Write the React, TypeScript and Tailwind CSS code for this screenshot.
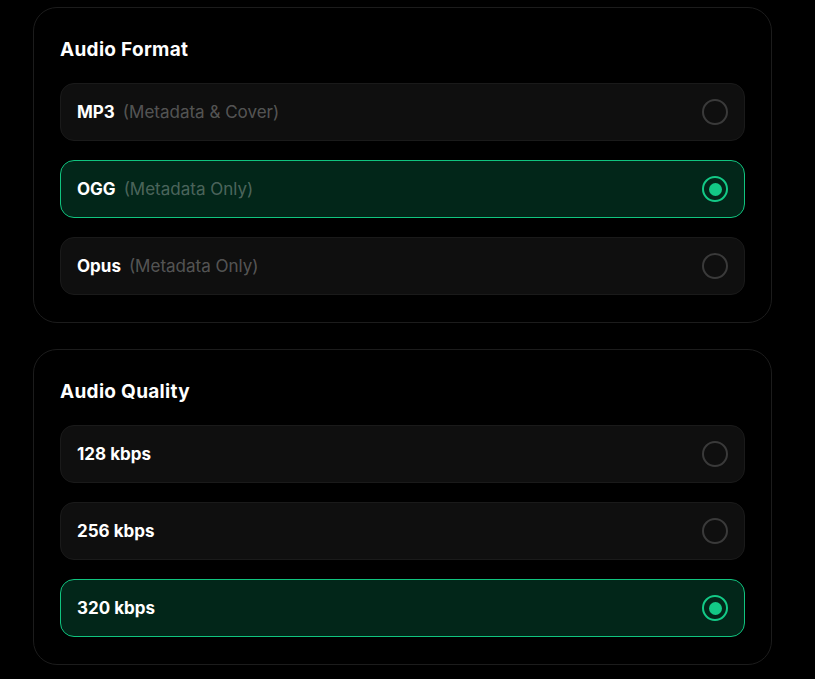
import React, { useState } from 'react';

type Opt = { id: string; label: string; note?: string };

const formats: Opt[] = [
  { id: 'mp3', label: 'MP3', note: '(Metadata & Cover)' },
  { id: 'ogg', label: 'OGG', note: '(Metadata Only)' },
  { id: 'opus', label: 'Opus', note: '(Metadata Only)' },
];

const qualities: Opt[] = [
  { id: '128', label: '128 kbps' },
  { id: '256', label: '256 kbps' },
  { id: '320', label: '320 kbps' },
];

const OptionGroup: React.FC<{ title: string; options: Opt[]; value: string; onChange: (v: string) => void }> = ({ title, options, value, onChange }) => {
  return (
    <div className="rounded-[24px] border border-[#1c1c1c] bg-black px-[26px] pt-[27px] pb-[27px]">
      <h2 className="text-[19px] leading-[30px] font-bold tracking-[0.3px] text-white mb-[18px]">{title}</h2>
      <div className="flex flex-col gap-[19px]">
        {options.map((o) => {
          const active = o.id === value;
          return (
            <button
              key={o.id}
              onClick={() => onChange(o.id)}
              className={
                active
                  ? 'h-[58px] w-full flex items-center justify-between rounded-[14px] border border-[#10c47f] bg-[#022619] pl-4 pr-4 text-left'
                  : 'h-[58px] w-full flex items-center justify-between rounded-[14px] border border-[#1a1a1a] bg-[#0f0f0f] pl-4 pr-4 text-left'
              }
            >
              <span className="text-[17px] leading-6">
                <span className="font-bold text-white">{o.label}</span>
                {o.note && <span className="ml-2 text-white/30">{o.note}</span>}
              </span>
              {active ? (
                <span className="w-[26px] h-[26px] rounded-full border-2 border-[#13c986] flex items-center justify-center">
                  <span className="w-[13px] h-[13px] rounded-full bg-[#13c986]" />
                </span>
              ) : (
                <span className="w-[26px] h-[26px] rounded-full border-2 border-[#3a3a3a]" />
              )}
            </button>
          );
        })}
      </div>
    </div>
  );
};

export default function App() {
  const [format, setFormat] = useState('ogg');
  const [quality, setQuality] = useState('320');
  return (
    <div className="min-h-screen bg-black font-['Inter',sans-serif] pl-[33px] pr-[43px] pt-[7px] pb-4">
      <div className="flex flex-col gap-[26px]">
        <OptionGroup title="Audio Format" options={formats} value={format} onChange={setFormat} />
        <OptionGroup title="Audio Quality" options={qualities} value={quality} onChange={setQuality} />
      </div>
    </div>
  );
}
